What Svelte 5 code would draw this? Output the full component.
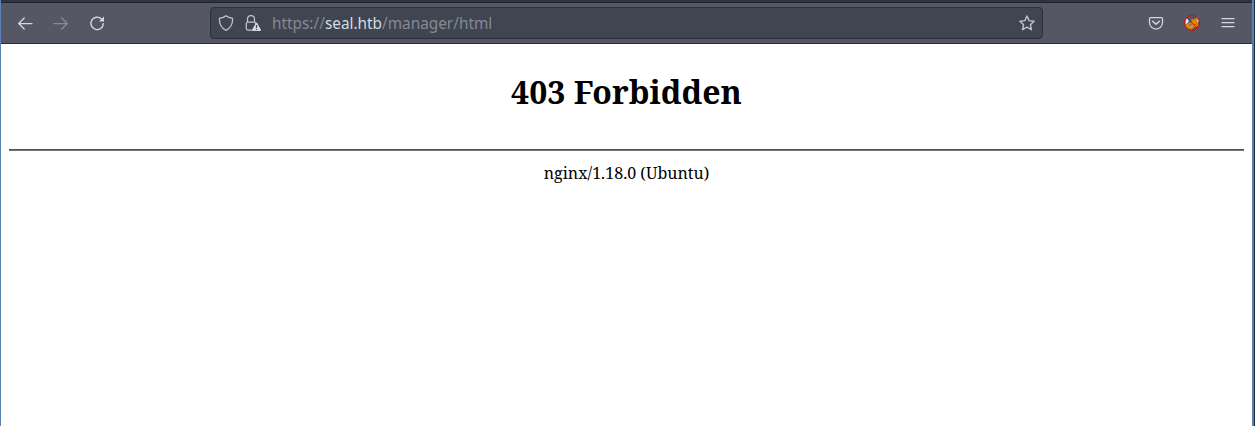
<script>
  const server = 'nginx/1.18.0 (Ubuntu)';
</script>

<div class="window">
  <div class="strip"></div>
  <header>
    <nav>
      <svg width="16" height="16" viewBox="0 0 16 16"><path d="M15 8.500H2M7.200 3L1.700 8.500l5.500 5.500" /></svg>
      <svg class="off" width="16" height="16" viewBox="0 0 16 16"><path d="M1 8.500h13M8.800 3l5.500 5.500L8.800 14" /></svg>
      <svg width="16" height="16" viewBox="0 0 16 16"><path d="M12.500 4A6.200 6.200 0 1 0 14.300 8.700" stroke-width="1.400" /><path class="solid" d="M15 1.600v5H10z" /></svg>
    </nav>
    <div class="url">
      <svg width="16" height="16" viewBox="0 0 16 16"><path d="M8 .8C6 2.400 3.800 3 1.400 3.400c-.2 5.800 1.800 9.700 6.600 12 4.800-2.300 6.800-6.200 6.600-12C12.200 3 10 2.400 8 .8z" /></svg>
      <svg class="lock" width="16" height="16" viewBox="0 0 16 16">
        <path d="M6.500 15H2.700a1.400 1.400 0 0 1-1.400-1.400V8.500a1.400 1.400 0 0 1 1.400-1.400h6.600a1.400 1.400 0 0 1 1.400 1.200M2.500 7V4a3.500 3.500 0 0 1 7 0v3" />
        <path class="solid" d="M11.500 7.500a.8.8 0 0 1 .7.400l3.700 6.800a.8.800 0 0 1-.7 1.200H7.800a.8.8 0 0 1-.7-1.200l3.700-6.800a.8.8 0 0 1 .7-.4z" />
        <path class="mark" d="M11.500 10v3M11.500 14v1" />
      </svg>
      <span class="address">https://<b>seal.htb</b>/manager/html</span>
      <svg class="star" width="16" height="16" viewBox="0 0 16 16"><path d="M8 1l2.100 4.600 5 .6-3.700 3.500 1 5L8 12.200l-4.400 2.500 1-5L.9 6.200l5-.6z" stroke-width="1.400" /></svg>
    </div>
    <div class="tools">
      <svg width="16" height="16" viewBox="0 0 16 16"><path d="M2.800 2.500h10.400a1.300 1.300 0 0 1 1.300 1.300v3.700a6.500 6.500 0 0 1-13 0V3.800a1.300 1.300 0 0 1 1.300-1.300z" /><path d="M4.700 6.300L8 9.300l3.300-3" stroke-width="1.500" /></svg>
      <svg class="fox" width="16" height="16" viewBox="0 0 16 16">
        <path d="M1.500 4l2.500-1 .8 4-3.300 3zM12 1.500l3 3.500-1 3-2-2z" fill="#e8e1df" />
        <path d="M4 8.500L7.500 7l0-3 2.500.5 3-2 .5 4 1 3.500-2 2-3 .5-2 2-4-1-2-2.500-1-2 2 .5z" fill="#e58009" />
        <path d="M4.500 10l2.500-.5 2 2-2 1z" fill="#aaa39c" />
        <path d="M6 10h1M11 10l1-1" stroke="#79420b" />
        <circle cx="8" cy="8" r="7.500" stroke="#c5121a" />
        <path d="M2.700 2.700l10.600 10.600" stroke="#c5121a" />
      </svg>
      <svg width="16" height="16" viewBox="0 0 16 16"><path d="M2 3.500h12M2 7.500h12M2 11.500h12" /></svg>
    </div>
  </header>
  <main>
    <h1>403 Forbidden</h1>
    <hr />
    <p>{server}</p>
  </main>
</div>

<style>
  :global(body) { margin: 0; background: #fff; overflow: hidden; }
  .window {
    box-sizing: border-box;
    width: 1255px;
    height: 426px;
    border-left: 1px solid #5b82b6;
    border-right: 1px solid #242a35;
    padding-right: 2px;
    background: linear-gradient(to left, #5a80b0 2px, #fff 2px);
  }
  .strip { height: 2px; background: #2f343f; border-bottom: 1px solid #20212e; }
  header {
    box-sizing: border-box;
    height: 41px;
    display: flex;
    align-items: center;
    background: #565764;
    border-bottom: 1px solid #2b2b39;
  }
  nav { display: flex; gap: 20px; padding-left: 16px; width: 193px; box-sizing: border-box; }
  nav, .tools { height: 16px; }
  svg { display: block; flex: none; fill: none; stroke: #d3dae3; stroke-width: 1.25; stroke-linecap: round; stroke-linejoin: round; }
  .off { opacity: .4; }
  .solid { fill: #d3dae3; stroke: none; }
  .url {
    box-sizing: border-box;
    display: flex;
    align-items: center;
    width: 833px;
    height: 32px;
    margin-left: 16px;
    padding: 0 7px;
    border: 1px solid #2b2e3b;
    border-radius: 4px;
    background: #404552;
  }
  .url svg { stroke: #bdc4cf; }
  .url .solid { fill: #d3dae3; stroke: none; }
  .url .mark { stroke: #404552; stroke-linecap: butt; }
  .lock { margin-left: 11px; }
  .address { margin-left: 11px; font: 15.35px/22px "Noto Sans", sans-serif; color: #858994; white-space: nowrap; }
  .address b { font-weight: 400; color: #d3dae3; }
  .url .star { margin-left: auto; }
  .tools { display: flex; gap: 20px; margin-left: auto; padding-right: 16px; }
  .fox { stroke: none; stroke-width: 1; }
  main { padding: 0 8px; text-align: center; color: #000; font-family: "Noto Serif", "Droid Serif", serif; }
  h1 { margin: 26px 0 36px; font-size: 32px; line-height: 43px; font-weight: 700; }
  hr { box-sizing: border-box; height: 2px; margin: 0; border: 0; border-top: 1px solid #515151; background: #777; }
  p { margin: 11px 0 0; font-size: 16px; line-height: 22px; letter-spacing: .04px; }
</style>
